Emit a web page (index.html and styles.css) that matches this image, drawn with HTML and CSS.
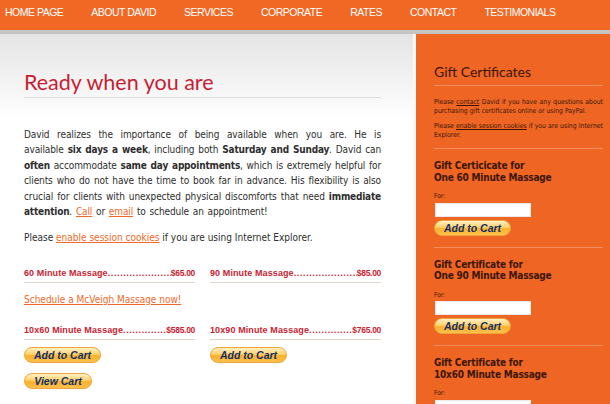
FILE: index.html
```html
<!DOCTYPE html>
<html lang="en">
<head>
  <meta charset="UTF-8" />
  <title>Rates | McVeigh Massage</title>
  <meta name="viewport" content="width=device-width, initial-scale=1.0"/>
  <link rel="stylesheet" href="styles.css">
</head>
<body>
  <nav class="topnav">
    <a href="#">HOME PAGE</a>
    <a href="#">ABOUT DAVID</a>
    <a href="#">SERVICES</a>
    <a href="#">CORPORATE</a>
    <a href="#">RATES</a>
    <a href="#">CONTACT</a>
    <a href="#">TESTIMONIALS</a>
  </nav>

  <div class="page">
    <div class="content">
      <h1>Ready when you are</h1>
      <p class="intro">
        David realizes the importance of being available when you are. He is<br>
        available <b>six days a week</b>, including both <b>Saturday and Sunday</b>. David can<br>
        <b>often</b> accommodate <b>same day appointments</b>, which is extremely helpful for<br>
        clients who do not have the time to book far in advance. His flexibility is also<br>
        crucial for clients with unexpected physical discomforts that need <b>immediate</b>
        <span class="last-line"><b>attention</b>. <a href="#">Call</a> or <a href="#">email</a> to schedule an appointment!</span>
      </p>
      <p class="note">Please <a href="#">enable session cookies</a> if you are using Internet Explorer.</p>

      <div class="rates">
        <div class="rate"><span>60 Minute Massage</span><span class="leader"></span><span class="price">$65.00</span></div>
        <div class="rate"><span>90 Minute Massage</span><span class="leader"></span><span class="price">$85.00</span></div>
      </div>

      <p class="schedule"><a href="#">Schedule a McVeigh Massage now!</a></p>

      <div class="rates packages">
        <div class="package">
          <div class="rate"><span>10x60 Minute Massage</span><span class="leader"></span><span class="price">$585.00</span></div>
          <button class="cart-btn">Add to Cart</button>
        </div>
        <div class="package">
          <div class="rate"><span>10x90 Minute Massage</span><span class="leader"></span><span class="price">$765.00</span></div>
          <button class="cart-btn">Add to Cart</button>
        </div>
      </div>

      <button class="cart-btn view-cart">View Cart</button>
    </div>

    <aside class="sidebar">
      <div class="side-intro">
        <h2>Gift Certificates</h2>
        <p>Please <a href="#">contact</a> David if you have any questions about purchasing gift certificates online or using PayPal.</p>
        <p>Please <a href="#">enable session cookies</a> if you are using Internet Explorer.</p>
      </div>

      <div class="gift">
        <h3>Gift Certicicate for<br>One 60 Minute Massage</h3>
        <label>For:</label>
        <input type="text">
        <button class="cart-btn">Add to Cart</button>
      </div>

      <div class="gift">
        <h3>Gift Certificate for<br>One 90 Minute Massage</h3>
        <label>For:</label>
        <input type="text">
        <button class="cart-btn">Add to Cart</button>
      </div>

      <div class="gift">
        <h3>Gift Certificate for<br>10x60 Minute Massage</h3>
        <label>For:</label>
        <input type="text">
        <button class="cart-btn">Add to Cart</button>
      </div>
    </aside>
  </div>
</body>
</html>
```

FILE: styles.css
```css
:root {
  --orange: #ef6524;
  --red: #c91d33;
  --link: #f0692a;
  --brown: #3b1604;
  --text: #2e2e2e;
}

* {
  box-sizing: border-box;
  margin: 0;
  padding: 0;
}

body {
  font-family: 'DejaVu Sans Condensed', 'DejaVu Sans', sans-serif;
  color: var(--text);
  background: #fff;
  overflow: hidden;
}

a {
  color: var(--link);
}

/* top menu */
.topnav {
  display: flex;
  gap: 28px;
  height: 30px;
  padding: 5px 0 0 5px;
  background: #f06824;
  white-space: nowrap;
}

.topnav a {
  color: #fff;
  text-decoration: none;
  font-family: 'Liberation Sans', Arial, sans-serif;
  font-size: 10.5px;
  line-height: 14px;
  letter-spacing: -0.5px;
}

.page {
  display: grid;
  grid-template-columns: 416px 1fr;
  border-top: 4px solid #c4c4c4;
  min-height: 380px;
}

/* main column */
.content {
  padding: 35px 32px 0 24px;
  background: linear-gradient(#e4e4e4, #fff 85px);
  border-right: 3px solid #f8f8f8;
}

h1 {
  font-family: Lato, 'Open Sans', sans-serif;
  font-weight: normal;
  font-size: 21.5px;
  line-height: 26px;
  color: var(--red);
  padding-bottom: 2px;
  border-bottom: 1px solid #dcdcdc;
}

.intro,
.note {
  font-size: 10px;
  line-height: 15.4px;
}

/* every line but the last is spread to the full width */
.intro {
  margin-top: 29px;
  letter-spacing: -0.1px;
  text-align: justify;
  text-align-last: justify;
}

.intro b {
  letter-spacing: -0.2px;
}

.last-line {
  display: block;
  text-align-last: auto;
  word-spacing: 1px;
}

.note {
  margin-top: 11px;
}

.rates {
  display: grid;
  grid-template-columns: repeat(2, minmax(0, 1fr));
  gap: 15px;
  margin-top: 21px;
}

.rate {
  display: flex;
  font-family: 'Liberation Sans', Arial, sans-serif;
  font-weight: bold;
  font-size: 9px;
  line-height: 12px;
  letter-spacing: 0.1px;
  color: var(--red);
  padding-bottom: 3px;
  border-bottom: 1px solid #ddd5cc;
  white-space: nowrap;
}

.leader {
  flex: 1;
  min-width: 0;
  overflow: hidden;
  letter-spacing: 0.6px;
}

.leader::after {
  content: '..................................................................';
}

.price {
  font-size: 8.5px;
  letter-spacing: -0.3px;
}

.schedule {
  margin-top: 9px;
  font-size: 10px;
  line-height: 15px;
}

.packages {
  margin-top: 17px;
}

.package .cart-btn {
  margin-top: 7px;
}

/* paypal style buttons */
.cart-btn {
  display: block;
  width: 77px;
  height: 16px;
  border: 1px solid #eea53c;
  border-radius: 8px;
  background: linear-gradient(#fff1c8, #ffd067 45%, #fbb02c 55%, #fcc14d);
  color: #0f2f6c;
  font-family: 'Liberation Sans', Arial, sans-serif;
  font-style: italic;
  font-weight: bold;
  font-size: 10.5px;
  line-height: 14px;
}

.view-cart {
  width: 68px;
  margin-top: 10px;
}

/* gift certificate sidebar */
.sidebar {
  background: var(--orange);
  color: var(--brown);
  padding: 29px 7px 0 18px;
}

.sidebar h2 {
  font-family: Lato, 'Open Sans', sans-serif;
  font-weight: normal;
  font-size: 14px;
  line-height: 18px;
  padding-bottom: 4px;
  border-bottom: 1px solid #f38c5c;
}

.sidebar a {
  color: var(--brown);
}

.side-intro {
  padding-bottom: 8px;
  border-bottom: 1px solid #f38c5c;
}

.side-intro p {
  font-size: 6.8px;
  line-height: 9px;
  text-align: justify;
  margin-top: 6px;
}

.side-intro h2 + p {
  margin-top: 12px;
}

.gift {
  padding: 11px 0 11px;
  border-bottom: 1px solid #f38c5c;
}

.gift h3 {
  font-size: 10px;
  line-height: 11.5px;
  letter-spacing: -0.2px;
}

.gift label {
  display: block;
  margin-top: 9px;
  font-size: 6.5px;
  line-height: 8.5px;
}

.gift input {
  display: block;
  width: 96px;
  height: 14px;
  margin: 2px 0 0 1px;
  border: 1px solid #e9e9e9;
  background: #fff;
}

.gift .cart-btn {
  margin-top: 3px;
}
```
